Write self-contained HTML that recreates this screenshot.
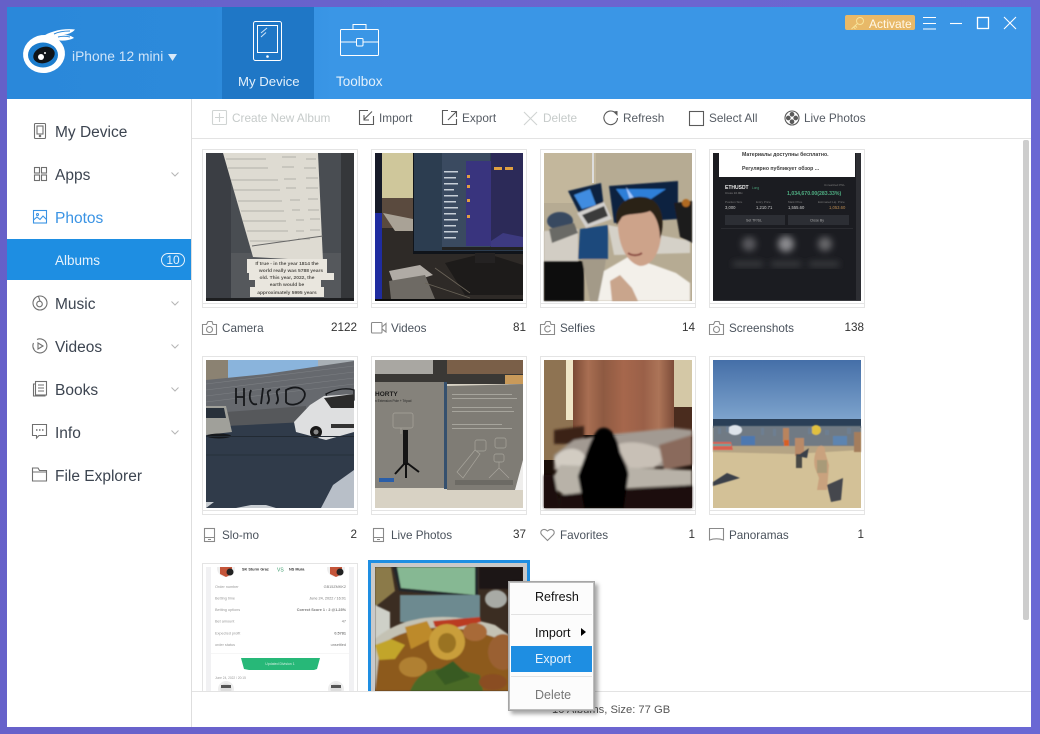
<!DOCTYPE html>
<html><head><meta charset="utf-8"><style>
*{box-sizing:border-box}
html,body{margin:0;padding:0;width:1040px;height:734px;overflow:hidden;background:#6a64cc;font-family:"Liberation Sans",sans-serif}
.a{position:absolute}
.t{position:absolute;white-space:nowrap;line-height:1}
.nav{font-size:15.5px;color:#3c4450;left:55px}
.tb{font-size:11.8px;color:#555b63}
.tb.d{color:#c6cbca}
.lab{font-size:11.7px;color:#4a525c}
.cnt{font-size:11.7px;color:#333;text-align:right;width:50px}
.fr{position:absolute;width:156px;height:159px;border:1px solid #e4e4e4;background:#fff}
.fr:after{content:"";position:absolute;left:-1px;right:-1px;bottom:3px;height:1px;background:#e4e4e4}
.ph{position:absolute;width:148px;height:148px;display:block;z-index:2;filter:blur(.35px)}
svg{display:block;overflow:visible}
.ic{position:absolute;fill:none;stroke:#6f6f6f;stroke-width:1.1}
.chev{position:absolute;width:8px;height:5px;fill:none;stroke:#b5b5b5;stroke-width:1}
</style></head><body>
<div class="a" style="left:0;top:0;width:1040px;height:734px;background:linear-gradient(100deg,#6560c8,#6c64cf 50%,#6a68d4)"></div>
<div class="a" style="left:7px;top:99px;width:1024px;height:628px;background:#fff"></div>

<!-- header -->
<div class="a" style="left:7px;top:7px;width:1024px;height:92px;background:linear-gradient(90deg,#2a88da,#2c8adb 20%,#3a96e6 32%,#3a96e6)"></div>
<div class="a" style="left:222px;top:7px;width:92px;height:92px;background:#1f77c6"></div>

<!-- logo -->
<svg class="a" style="left:20px;top:26px" width="60" height="52" viewBox="0 0 60 52">
<path d="M22 11C30 5 44 2 55 3.500C52 7 48 8 44 9C48 9 52 10 54 12C48 15 42 15 34 14Z" fill="#fff"/>
<path d="M34 8C38 6 44 5 50 5M38 11C42 10 46 10 50 11" stroke="#2a88da" stroke-width="1" fill="none"/>
<ellipse cx="24" cy="28" rx="21" ry="19" fill="#fff" transform="rotate(-8 24 28)"/>
<ellipse cx="23" cy="29" rx="15" ry="12.500" fill="#1c7ccc"/>
<ellipse cx="24" cy="29" rx="11" ry="8" fill="#101418" transform="rotate(-18 24 29)"/>
<circle cx="21" cy="31" r="3" fill="#fff"/><circle cx="25" cy="27" r="1" fill="#fff"/>
</svg>
<div class="t" style="left:72px;top:50px;font-size:13.8px;color:#cfe4f8">iPhone 12 mini</div>
<svg class="a" style="left:168px;top:54px" width="9" height="7"><path d="M0 0H9L4.500 7Z" fill="#d8e9f9"/></svg>

<!-- tab icons -->
<svg class="a" style="left:252px;top:20px" width="32" height="42" fill="none" stroke="#fff" stroke-width="1"><rect x="1.500" y="1.500" width="28" height="39" rx="2"/><rect x="5.500" y="5.500" width="20" height="27"/><path d="M9 13L15 8M9 17L14 12.500" stroke="#cfe4f8"/><circle cx="15.500" cy="36.500" r="1.300" fill="#fff" stroke="none"/></svg>
<svg class="a" style="left:339px;top:23px" width="42" height="34" fill="none" stroke="#fff" stroke-width="1"><path d="M14 6.500V1.500H27V6.500"/><rect x="1.500" y="6.500" width="38" height="26" rx="1"/><path d="M1.500 19H17M24 19H39.500"/><rect x="17.500" y="15.500" width="6.500" height="7.500" rx="1"/></svg>
<div class="t" style="left:238px;top:75px;font-size:13.2px;color:#e3f0fb">My Device</div>
<div class="t" style="left:336px;top:75px;font-size:13.5px;color:#e3f0fb">Toolbox</div>

<!-- activate -->
<div class="a" style="left:845px;top:15px;width:70px;height:15px;background:#e8b968;border-radius:2px"></div>
<svg class="a" style="left:850px;top:16px" width="15" height="14" fill="none" stroke="#f7e39a" stroke-width="1"><circle cx="10" cy="5" r="3.500"/><path d="M7.500 7.500L1.500 13M3.500 11L5.500 13M5 9.500L7 11.500"/></svg>
<div class="t" style="left:869px;top:18px;font-size:12px;color:#fff8e8">Activate</div>
<svg class="a" style="left:920px;top:14px" width="100" height="18" fill="none" stroke="#fff" stroke-width="1.100">
<path d="M3 3.500H16M3 9.500H16M3 15H16"/><path d="M30 9.500H42"/><rect x="57.500" y="3.500" width="11" height="11" stroke-width="1.300"/><path d="M84 3L96 15M96 3L84 15"/></svg>

<!-- sidebar -->
<div class="a" style="left:191px;top:99px;width:1px;height:628px;background:#dedede"></div>
<div class="a" style="left:7px;top:239px;width:184px;height:41px;background:#1e8ee2"></div>
<div class="t nav" style="top:125px">My Device</div>
<div class="t nav" style="top:168px">Apps</div>
<div class="t nav" style="top:211px;color:#3a93e4">Photos</div>
<div class="t" style="left:55px;top:254px;font-size:13.5px;color:#e6f2fc">Albums</div>
<div class="a" style="left:161px;top:253px;width:24px;height:14px;border:1px solid #e6f2fc;border-radius:8px;color:#e6f2fc;font-size:12px;line-height:12px;text-align:center">10</div>
<div class="t nav" style="top:297px">Music</div>
<div class="t nav" style="top:340px">Videos</div>
<div class="t nav" style="top:383px">Books</div>
<div class="t nav" style="top:426px">Info</div>
<div class="t nav" style="top:469px">File Explorer</div>

<svg class="ic" style="left:34px;top:123px" width="13" height="17"><rect x=".5" y=".5" width="11" height="15" rx="1"/><rect x="3" y="3" width="6" height="8"/><circle cx="6" cy="13" r=".7" fill="#6f6f6f"/></svg>
<svg class="ic" style="left:34px;top:167px" width="14" height="15"><rect x=".5" y=".5" width="5" height="5.500"/><rect x="7.500" y=".5" width="5" height="5.500"/><rect x="7.500" y="8" width="5" height="5.500"/><rect x=".5" y="8" width="5" height="5.500"/></svg>
<svg class="ic" style="left:33px;top:210px;stroke:#3a93e4" width="15" height="14"><rect x=".5" y=".5" width="13" height="12.500"/><circle cx="4.500" cy="4.500" r="1"/><path d="M.5 10L4 7L7 9.500L10 6L13.500 9.500"/></svg>
<svg class="ic" style="left:32px;top:295px" width="16" height="16"><circle cx="8" cy="8" r="7"/><circle cx="7.500" cy="9" r="2.800"/><path d="M8 6L6.500 1.500"/></svg>
<svg class="ic" style="left:32px;top:338px" width="16" height="16"><path d="M5 1.500A7 7 0 1 1 1.500 5M1 9A7 7 0 0 0 2 11"/><path d="M6 5V11L11 8Z"/></svg>
<svg class="ic" style="left:33px;top:381px" width="15" height="16"><rect x="2.500" y=".5" width="11" height="13.500"/><path d="M2.500 3H.5V15H12V14M5 4H11M5 7H11M5 10H11"/></svg>
<svg class="ic" style="left:32px;top:424px" width="16" height="16"><path d="M.5 .5H14.500V11.500H7L4.500 14V11.500H.5Z"/><path d="M4 6H5.500M7 6H8.500M10 6H11.500" stroke-width="1.500"/></svg>
<svg class="ic" style="left:32px;top:467px" width="16" height="15"><path d="M.5 14V1H6L7.500 3.500H14.500V14ZM.5 5H14.500"/></svg>
<svg class="chev" style="left:171px;top:172px"><path d="M.5 .5L4 4L7.500 .5"/></svg>
<svg class="chev" style="left:171px;top:301px"><path d="M.5 .5L4 4L7.500 .5"/></svg>
<svg class="chev" style="left:171px;top:344px"><path d="M.5 .5L4 4L7.500 .5"/></svg>
<svg class="chev" style="left:171px;top:387px"><path d="M.5 .5L4 4L7.500 .5"/></svg>
<svg class="chev" style="left:171px;top:430px"><path d="M.5 .5L4 4L7.500 .5"/></svg>

<!-- toolbar -->
<div class="a" style="left:192px;top:138px;width:839px;height:1px;background:#e3e3e3"></div>
<svg class="ic" style="left:212px;top:110px;stroke:#d0d4d3" width="16" height="16"><rect x=".5" y=".5" width="14" height="14" rx="1"/><path d="M7.500 3V12M3 7.500H12"/></svg>
<div class="t tb d" style="left:232px;top:113px">Create New Album</div>
<svg class="ic" style="left:359px;top:110px;stroke:#5a5a5a" width="16" height="16"><path d="M9 .5H.5V14.500H14.500V6"/><path d="M13 1.500L5 9.500M5 5V10H10"/></svg>
<div class="t tb" style="left:379px;top:113px">Import</div>
<svg class="ic" style="left:442px;top:110px;stroke:#5a5a5a" width="16" height="16"><path d="M6 .5H.5V14.500H14.500V9"/><path d="M6 10L14 2M9 1.500H14.500V7"/></svg>
<div class="t tb" style="left:462px;top:113px">Export</div>
<svg class="ic" style="left:523px;top:111px;stroke:#d0d4d3" width="15" height="15"><path d="M1 1L14 14M14 1L1 14"/></svg>
<div class="t tb d" style="left:543px;top:113px">Delete</div>
<svg class="ic" style="left:603px;top:110px;stroke:#5a5a5a" width="16" height="16"><path d="M12.500 3A6.800 6.800 0 1 0 14.500 8"/><path d="M10 1.500L14.500 1V6Z" fill="#5a5a5a" stroke="none"/></svg>
<div class="t tb" style="left:623px;top:113px">Refresh</div>
<svg class="ic" style="left:689px;top:111px;stroke:#5a5a5a" width="15" height="15"><rect x=".5" y=".5" width="14" height="14"/></svg>
<div class="t tb" style="left:709px;top:113px">Select All</div>
<svg class="ic" style="left:784px;top:110px;stroke:#5a5a5a" width="16" height="16"><circle cx="8" cy="8" r="7"/><circle cx="8" cy="4.300" r="1.800" fill="#5a5a5a"/><circle cx="8" cy="11.700" r="1.800" fill="#5a5a5a"/><circle cx="4.300" cy="8" r="1.800" fill="#5a5a5a"/><circle cx="11.700" cy="8" r="1.800" fill="#5a5a5a"/></svg>
<div class="t tb" style="left:804px;top:113px">Live Photos</div>

<!-- scrollbar -->
<div class="a" style="left:1023px;top:140px;width:6px;height:480px;background:#cdcdcd;border-radius:2px"></div>

<!-- frames -->
<div class="fr" style="left:202px;top:149px"></div><div class="fr" style="left:371px;top:149px"></div><div class="fr" style="left:540px;top:149px"></div><div class="fr" style="left:709px;top:149px"></div>
<div class="fr" style="left:202px;top:356px"></div><div class="fr" style="left:371px;top:356px"></div><div class="fr" style="left:540px;top:356px"></div><div class="fr" style="left:709px;top:356px"></div>
<div class="fr" style="left:202px;top:563px"></div>
<div class="a" style="left:368px;top:560px;width:162px;height:140px;background:#c9c9c9;border:3px solid #1e8ee2"></div>

<!-- 1 Camera -->
<svg class="ph" style="left:206px;top:153px" viewBox="0 0 148 148">
<rect width="148" height="148" fill="#494d52"/><rect x="135" width="13" height="148" fill="#35373a"/><rect width="25" height="148" fill="#3b3e44"/><rect x="25" y="100" width="110" height="45" fill="#55585c"/>
<path d="M17 0H112L117 108L47 104Z" fill="#dedbd2"/>
<g stroke="#b2b1aa" stroke-width="1">
<path d="M20 6H60M76 4H90M100 6H110M22 15H62M76 14H88M98 15H110M25 27H72M78 26H90M100 25H112M28 37H74M80 35H90M100 35H112M32 48H76M84 47H94M102 46H112M35 58H78M86 57H94M102 57H113M37 68H80M90 67H98M104 66H114M41 78H82M90 78H98M104 77H114M44 88H84M92 86H104"/></g>
<path d="M46 93L117 83" stroke="#666" stroke-width="1"/>
<rect x="41" y="106" width="80" height="14" fill="#e9e6de"/><rect x="43" y="120" width="85" height="7" fill="#e9e6de"/><rect x="49" y="127" width="66" height="7" fill="#e9e6de"/><rect x="44" y="134" width="74" height="10" fill="#e9e6de"/>
<g font-family="Liberation Sans" font-size="4.900" font-weight="bold" fill="#55534e" text-anchor="middle"><text x="81" y="112">If true - in the year 1814 the</text><text x="85" y="119">world really was 5788 years</text><text x="81" y="126">old. This year, 2022, the</text><text x="81" y="133">earth would be</text><text x="81" y="141">approximately 5995 years</text></g>
<rect y="145" width="148" height="3" fill="#1d1e20"/>
</svg>
<!-- 2 Videos -->
<svg class="ph" style="left:375px;top:153px" viewBox="0 0 148 148">
<rect width="148" height="148" fill="#2e2a27"/><rect width="40" height="45" fill="#cfc79b"/>
<rect y="45" width="40" height="30" fill="#5a4a3e"/>
<path d="M8 60L38 66V78L20 78Z" fill="#a9a296"/>
<rect y="0" width="7" height="148" fill="#161a28"/><rect y="60" width="7" height="88" fill="#1f2ca0"/>
<rect x="38" y="0" width="110" height="101" fill="#10141a"/>
<rect x="39" y="0" width="109" height="98" fill="#2c3d50"/>
<rect x="67" y="0" width="48" height="97" fill="#3a4a60"/>
<rect x="91" y="8" width="25" height="85" fill="#39347e"/>
<rect x="116" y="0" width="32" height="97" fill="#2c2a58"/>
<g fill="#c7cfd7"><rect x="69" y="18" width="14" height="1.500"/><rect x="69" y="24" width="12" height="1.500"/><rect x="69" y="30" width="14" height="1.500"/><rect x="69" y="36" width="10" height="1.500"/><rect x="69" y="42" width="14" height="1.500"/><rect x="69" y="48" width="12" height="1.500"/><rect x="69" y="54" width="14" height="1.500"/><rect x="69" y="60" width="12" height="1.500"/><rect x="69" y="66" width="14" height="1.500"/><rect x="69" y="72" width="12" height="1.500"/><rect x="69" y="78" width="14" height="1.500"/><rect x="69" y="84" width="12" height="1.500"/></g>
<g fill="#e0a040"><rect x="92" y="22" width="3" height="3"/><rect x="92" y="32" width="3" height="3"/><rect x="92" y="46" width="3" height="3"/><rect x="92" y="62" width="3" height="3"/><rect x="119" y="14" width="8" height="3"/><rect x="130" y="14" width="8" height="3"/></g>
<path d="M116 88L128 80L148 84V97H116Z" fill="#3d3a80"/><rect x="67" y="94" width="81" height="3" fill="#222"/>
<path d="M14 118L45 112L58 122L20 134Z" fill="#b0aba5"/><path d="M14 128L50 122L60 146H16Z" fill="#6e6a64"/>
<path d="M70 110L110 100L148 112V142H90Z" fill="#1d1b1a"/><rect x="100" y="100" width="20" height="10" fill="#242222"/>
<path d="M50 130L95 145M60 115L95 140" stroke="#6a6358" stroke-width=".8"/><rect y="146" width="148" height="2" fill="#0d0d0d"/>
</svg>
<!-- 3 Selfies -->
<svg class="ph" style="left:544px;top:153px" viewBox="0 0 148 148"><defs><filter id="b1"><feGaussianBlur stdDeviation=".8"/></filter></defs>
<rect width="148" height="148" fill="#b6ab93"/><rect width="52" height="50" fill="#c3b79c"/><rect x="48" width="2" height="30" fill="#ddd"/>
<g filter="url(#b1)">
<path d="M65 33L134 28L134 66L70 70Z" fill="#10203f"/><path d="M72 36L90 60L104 48L122 36Z" fill="#2f7fd8"/><path d="M82 34L98 56L90 60Z" fill="#a8ccff"/>
<path d="M24 38L57 30L60 55L36 62Z" fill="#10203f"/><path d="M30 42L46 36L52 52L38 56Z" fill="#3f8ce0"/>
<path d="M33 60L60 49L68 66L42 75Z" fill="#d3d0cd"/><path d="M38 62L60 53L64 63L44 71Z" fill="#3a3a3a"/>
<path d="M0 78L34 76L34 108L0 108Z" fill="#d2cdc4"/><rect y="108" width="40" height="40" fill="#101010"/>
<ellipse cx="16" cy="68" rx="13" ry="9" fill="#394a60"/><path d="M5 76L30 70L34 80L8 90Z" fill="#6a6a66"/>
<path d="M36 76L64 72V106H34Z" fill="#1d4a7b"/><path d="M64 72L146 88V100L70 102Z" fill="#d5d1c8"/><path d="M38 106H62L56 148H46Z" fill="#a39a88"/>
<path d="M130 50L148 48V90L136 84Z" fill="#1f1d1b"/><circle cx="142" cy="50" r="4" fill="#b06a20"/>
<path d="M54 148L60 118L84 104L110 112L132 120L146 130V148Z" fill="#f3f0ea"/><path d="M68 148L66 128L76 122L88 135L94 148Z" fill="#c9a58c"/>
<path d="M74 76C74 55 88 48 102 50C116 52 120 66 117 84C115 102 107 113 96 113C84 110 76 96 74 76Z" fill="#cda38a"/>
<path d="M73 72C68 50 86 42 100 44C118 46 122 68 116 86C116 74 112 62 106 58C96 62 84 60 78 64Z" fill="#2c2019"/>
<path d="M84 100C88 103 94 103 98 100" stroke="#8a4a40" stroke-width="2" fill="none"/>
</g></svg>
<!-- 4 Screenshots -->
<svg class="ph" style="left:713px;top:153px" viewBox="0 0 148 148"><defs><filter id="b2"><feGaussianBlur stdDeviation="3.500"/></filter></defs>
<rect width="148" height="148" fill="#1b1c21"/><rect x="143" width="5" height="148" fill="#2d2e33"/><rect y="147" width="148" height="1" fill="#3a3b40"/>
<rect x="6" width="136" height="24" fill="#fff"/>
<g font-family="Liberation Sans,sans-serif" fill="#3a3a3a" font-weight="bold" font-size="5.200"><text x="29" y="3">Материалы доступны бесплатно.</text><text x="29" y="17">Регулярно публикует обзор ...</text></g>
<g font-family="Liberation Sans,sans-serif"><text x="12" y="36" font-size="5" font-weight="bold" fill="#e8e8e8">ETHUSDT</text><text x="39" y="36" font-size="3.200" fill="#4a9f78">Long</text><text x="12" y="41" font-size="3" fill="#888">Cross 10.00x</text><text x="111" y="33" font-size="3" fill="#777">Unrealized PNL</text><text x="74" y="42" font-size="5.200" font-weight="bold" fill="#4fae82">1,034,670.00(283.33%)</text>
<g font-size="3" fill="#777"><text x="12" y="50">Position Size</text><text x="43" y="50">Entry Price</text><text x="75" y="50">Mark Price</text><text x="105" y="50">Estimated Liq. Price</text></g>
<g font-size="4.200" fill="#ccc"><text x="12" y="56">3,000</text><text x="43" y="56">1,210.71</text><text x="75" y="56">1,555.60</text><text x="116" y="56" fill="#b98a50">1,053.60</text></g></g>
<rect x="12" y="62" width="60" height="10" fill="#2c2e34"/><rect x="75" y="62" width="61" height="10" fill="#2c2e34"/>
<g font-family="Liberation Sans,sans-serif" font-size="3.500" fill="#aaa"><text x="33" y="68.500">Set TP/SL</text><text x="97" y="68.500">Close By</text></g>
<rect x="8" y="75" width="132" height="1" fill="#2a2b30"/>
<g filter="url(#b2)"><circle cx="36" cy="91" r="7" fill="#5a5a5e"/><circle cx="73" cy="91" r="8" fill="#8a8a8e"/><circle cx="112" cy="91" r="7" fill="#67676b"/><rect x="20" y="109" width="30" height="4" fill="#45464a"/><rect x="58" y="109" width="30" height="4" fill="#45464a"/><rect x="96" y="109" width="30" height="4" fill="#45464a"/></g>
</svg>

<!-- 5 Slo-mo -->
<svg class="ph" style="left:206px;top:360px" viewBox="0 0 148 148">
<rect width="148" height="148" fill="#303b4a"/><rect width="148" height="20" fill="#8ab4dc"/><rect width="22" height="20" fill="#8b8272"/><rect x="112" width="36" height="6" fill="#a9b0b5"/>
<path d="M0 20L60 14L148 1V42L90 50L0 58Z" fill="#66696e"/>
<g stroke="#7c7f83" stroke-width=".6"><path d="M0 24L148 6M0 30L148 12M0 36L148 18M0 42L148 24"/></g>
<g fill="none" stroke="#16181b" stroke-width="1.800"><path d="M30 44V28M38 46V28M30 37H38M45 30C42 38 45 46 51 44M57 28L55 44M65 30C57 32 67 38 61 44M74 29C66 31 76 38 70 44M80 30C92 24 102 30 98 38C94 46 82 46 80 42Z"/><path d="M120 34C132 28 142 28 148 30V40H122Z" stroke-width="1.300"/></g>
<path d="M20 52L100 46V62L20 66Z" fill="#56585b"/>
<path d="M88 62L104 45L118 36L148 34V72L120 80L90 72Z" fill="#dedfe0"/><path d="M118 38L148 34V48L125 48Z" fill="#2b2b2b"/><circle cx="110" cy="72" r="6" fill="#181818"/><circle cx="110" cy="72" r="2.500" fill="#888"/><rect x="125" y="64" width="23" height="4" fill="#333"/>
<path d="M0 46H20L26 72L0 75Z" fill="#a0a09a"/><path d="M0 48H18L20 58H0Z" fill="#28303a"/><ellipse cx="13" cy="76" rx="12" ry="2.500" fill="#15181c"/>
<rect y="76" width="148" height="1" fill="#222a33"/><path d="M0 95H148" stroke="#26303b"/>
<path d="M115 148L127 125L148 110V148Z" fill="#b8bfc8"/><path d="M0 142H8L0 148ZM30 148L45 145H60L70 148Z" fill="#c8cdd2"/>
</svg>
<!-- 6 Live Photos -->
<svg class="ph" style="left:375px;top:360px" viewBox="0 0 148 148">
<rect width="148" height="148" fill="#d8d2c4"/><rect width="148" height="24" fill="#3a3835"/><rect x="72" width="76" height="14" fill="#7a5f48"/><rect width="58" height="14" fill="#a9a7a2"/>
<rect x="130" y="15" width="18" height="9" fill="#c99a5a"/>
<path d="M0 22H69V128H0Z" fill="#85827b"/><path d="M72 26L148 24V112L140 130H72Z" fill="#7f7c75"/><rect x="69" y="22" width="3" height="107" fill="#35506e"/>
<text x="0" y="36" font-family="Liberation Sans" font-size="6.500" font-weight="bold" fill="#1c1c1c">HORTY</text><text x="0" y="42" font-family="Liberation Sans" font-size="3.200" fill="#222">n Extension Pole + Tripod</text>
<g fill="none" stroke="#a8a59c" stroke-width=".7"><rect x="18" y="53" width="20" height="15" rx="2"/><path d="M26 68V74"/><path d="M82 112L100 90L105 94L88 118Z"/><rect x="120" y="78" width="11" height="10" rx="2"/><rect x="100" y="80" width="11" height="11" rx="2"/><path d="M114 118L124 108L134 118M124 108V102"/><rect x="119" y="94" width="10" height="8" rx="2"/></g>
<rect x="28" y="70" width="5" height="35" fill="#151515"/><path d="M30 103L20 114M31 103L31 118M32 103L44 112" stroke="#111" stroke-width="2" fill="none"/>
<rect x="4" y="118" width="15" height="4" fill="#2a5ea8"/>
<g fill="#a6a49c"><rect x="77" y="34" width="60" height="1"/><rect x="77" y="38" width="65" height="1"/><rect x="77" y="47" width="60" height="1"/><rect x="77" y="51" width="62" height="1"/><rect x="77" y="64" width="50" height="1"/><rect x="77" y="68" width="60" height="1"/></g>
<rect x="80" y="120" width="58" height="5" fill="#6c6a64"/>
<path d="M140 130L148 100V130Z" fill="#efeeec"/>
</svg>
<!-- 7 Favorites -->
<svg class="ph" style="left:544px;top:360px" viewBox="0 0 148 148"><defs><linearGradient id="c1" x1="0" x2="1" y1="0" y2="0"><stop offset="0" stop-color="#7a4a34"/><stop offset=".15" stop-color="#a86e52"/><stop offset=".3" stop-color="#8e5a42"/><stop offset=".5" stop-color="#a6674c"/><stop offset=".7" stop-color="#9a6048"/><stop offset=".85" stop-color="#ac7458"/><stop offset="1" stop-color="#7c4c38"/></linearGradient><filter id="b3"><feGaussianBlur stdDeviation="1.200"/></filter></defs>
<rect width="148" height="148" fill="#1a0e08"/><rect width="30" height="100" fill="#8e7352"/><rect x="22" width="8" height="60" fill="#efe6c6"/>
<rect x="29" width="101" height="75" fill="url(#c1)"/><rect x="130" width="18" height="47" fill="#d4c8a6"/><rect x="130" y="47" width="18" height="30" fill="#4a2c1e"/>
<g filter="url(#b3)"><path d="M10 70L40 66V84H10Z" fill="#3a2016"/><path d="M10 95L30 80L60 75L90 72L130 68L148 70V105L50 110L10 110Z" fill="#a29a92"/>
<path d="M10 100C16 85 40 85 42 100L36 110H14Z" fill="#d2ccc2"/><path d="M72 85C90 78 115 86 125 95L110 108L85 108Z" fill="#c8c0b6"/>
<path d="M115 85L148 75V105L120 110Z" fill="#8a6a5c"/><path d="M5 125L16 105L148 110V125L60 130L20 135Z" fill="#b8b2a8"/>
<path d="M0 115H10L16 148H0ZM16 135L148 125V148H16Z" fill="#1f110a"/>
<path d="M34 116C44 90 50 68 58 68C68 66 74 80 76 92C82 106 86 112 84 118L80 148H40Z" fill="#060606"/></g>
</svg>
<!-- 8 Panoramas -->
<svg class="ph" style="left:713px;top:360px" viewBox="0 0 148 148"><defs><linearGradient id="s1" x1="0" x2="0" y1="0" y2="1"><stop offset="0" stop-color="#456fa8"/><stop offset="1" stop-color="#7ea4cd"/></linearGradient><filter id="b4"><feGaussianBlur stdDeviation=".5"/></filter></defs>
<rect width="148" height="60" fill="url(#s1)"/><rect y="59" width="148" height="9" fill="#2a3f57"/><rect y="68" width="148" height="80" fill="#d3c197"/>
<g filter="url(#b4)"><rect y="66" width="148" height="20" fill="#6f7a84"/><path d="M0 86H148V90L80 94L0 92Z" fill="#b5a484"/>
<ellipse cx="22" cy="70" rx="7" ry="5" fill="#dde3ea"/><rect x="28" y="76" width="14" height="9" fill="#4d78b0"/><circle cx="103" cy="70" r="5" fill="#e0c040"/><rect x="120" y="76" width="14" height="9" fill="#5d84b0"/>
<rect x="70" y="68" width="6" height="14" fill="#b9845d"/><rect x="71" y="80" width="5" height="6" fill="#d86020"/><rect x="82" y="78" width="9" height="18" fill="#b98a68"/><rect x="83" y="94" width="6" height="14" fill="#4a4a44"/>
<path d="M0 82H18L20 90H0Z" fill="#d96050"/><path d="M0 85H18" stroke="#5ea5a0" stroke-width="2"/><path d="M105 87C108 84 113 86 112 92L116 105L114 130H104L106 118L102 108C100 100 102 92 105 87Z" fill="#c9a27e"/><rect x="104" y="100" width="10" height="13" fill="#a89a78"/>
<path d="M0 122L14 113L27 118L0 126Z" fill="#3a3f48"/><path d="M84 96L96 88L94 98Z" fill="#3a3f48"/><path d="M114 125L130 118L128 140L118 142Z" fill="#45474d"/>
<rect x="141" y="72" width="7" height="20" fill="#a47d5c"/>
<g fill="#6d7e92"><rect x="5" y="68" width="3" height="6"/><rect x="13" y="66" width="3" height="6"/><rect x="48" y="68" width="3" height="7"/><rect x="60" y="69" width="3" height="7"/><rect x="95" y="68" width="4" height="6"/><rect x="112" y="70" width="4" height="5"/><rect x="134" y="68" width="4" height="6"/></g></g>
</svg>

<!-- 9 betting -->
<div class="a" style="left:206px;top:567px;width:148px;height:124px;background:#f1f1f3;overflow:hidden;z-index:2">
<svg width="148" height="124" viewBox="0 0 148 124"><rect x="5" width="138" height="124" fill="#fff"/>
<g font-family="Liberation Sans" font-size="3.800" fill="#999"><text x="9" y="21">Order number</text><text x="9" y="32.500">Betting time</text><text x="9" y="44">Betting options</text><text x="9" y="55.500">Bet amount</text><text x="9" y="67.500">Expected profit</text><text x="9" y="79">order status</text><text x="9" y="112" font-size="3.200">June 24, 2022 / 20:15</text></g>
<g font-family="Liberation Sans" font-size="3.800" fill="#777" text-anchor="end"><text x="140" y="21">GB15ZMKK2</text><text x="140" y="32.500">June 24, 2022 / 16:01</text><text x="140" y="44" font-weight="bold">Correct Score 1 : 2 @1.23%</text><text x="140" y="55.500">47</text><text x="140" y="67.500" font-weight="bold">0.5781</text><text x="140" y="79">unsettled</text></g>
<text x="36" y="3.500" font-family="Liberation Sans" font-size="3.800" font-weight="bold" fill="#333">SK Sturm Graz</text><text x="71" y="4.500" font-family="Liberation Sans" font-size="5" fill="#3a9a6a">VS</text><text x="83" y="3.500" font-family="Liberation Sans" font-size="3.800" font-weight="bold" fill="#333">NS Mura</text>
<circle cx="20" cy="1" r="9" fill="#eee"/><path d="M14 -6H26V7L20 10L14 7Z" fill="#c4553a"/><circle cx="24" cy="5" r="3.500" fill="#222"/>
<circle cx="130" cy="1" r="9" fill="#eee"/><path d="M124 -6H136V7L130 10L124 7Z" fill="#c4553a"/><circle cx="134" cy="5" r="3.500" fill="#222"/>
<path d="M35 91H114L111 102L108 103H43L38 102Z" fill="#27b878"/><text x="74" y="98" font-family="Liberation Sans" font-size="3.500" fill="#d3f0e2" text-anchor="middle">Updated Division 1</text>
<rect x="5" y="86" width="138" height=".5" fill="#eee"/>
<circle cx="20" cy="122" r="8" fill="#eee"/><circle cx="20" cy="122" r="5.500" fill="#ddd"/><rect x="15" y="118" width="10" height="3" fill="#555"/><circle cx="130" cy="122" r="8" fill="#eee"/><circle cx="130" cy="122" r="5.500" fill="#ddd"/><rect x="125" y="118" width="10" height="3" fill="#555"/></svg></div>

<!-- 10 food -->
<div class="a" style="left:375px;top:567px;width:148px;height:124px;background:#3a2a20;overflow:hidden;z-index:2">
<svg width="148" height="124" viewBox="0 0 148 124"><defs><filter id="b5"><feGaussianBlur stdDeviation=".7"/></filter></defs>
<rect width="148" height="124" fill="#3b2d22"/><g filter="url(#b5)">
<path d="M0 0H16L20 24L0 40Z" fill="#8b7a4a"/><path d="M18 0H103V30L100 31L24 24Z" fill="#20262a"/><path d="M22 0H100V28L26 21Z" fill="#86b893"/>
<rect x="104" width="44" height="22" fill="#1b1613"/><path d="M25 28H105V60L25 55Z" fill="#6d8a90"/>
<ellipse cx="121" cy="32" rx="11" ry="9" fill="#a8aaa5"/><path d="M0 38L15 45V68L0 78Z" fill="#ced0c8"/>
<path d="M0 72C30 45 80 46 120 58L148 78V124H0Z" fill="#c4c2b4"/><path d="M5 80C30 55 90 55 130 75L148 90V124H0Z" fill="#8d5a1c"/>
<path d="M0 78L16 72L30 78L20 92L4 93Z" fill="#c2a52a"/><path d="M58 54L105 50L106 55L80 61L60 60Z" fill="#ba3a24"/>
<path d="M30 60L52 54L60 70L36 82Z" fill="#bd8a2a"/><ellipse cx="72" cy="75" rx="18" ry="18" fill="#c99e3a"/><ellipse cx="72" cy="76" rx="9" ry="10" fill="#9a7322"/>
<ellipse cx="100" cy="65" rx="12" ry="9" fill="#a86a38"/><ellipse cx="128" cy="85" rx="15" ry="18" fill="#9a6030"/>
<ellipse cx="38" cy="100" rx="14" ry="10" fill="#b08030"/><path d="M35 124C45 100 65 96 105 108L108 124Z" fill="#4a6a26"/><path d="M60 105L78 94L95 110L70 118Z" fill="#385a20"/>
<ellipse cx="118" cy="115" rx="14" ry="8" fill="#8a4e20"/></g></svg></div>

<!-- footer -->
<div class="a" style="left:192px;top:691px;width:839px;height:36px;background:#fff;border-top:1px solid #e3e3e3;z-index:3"></div>
<div class="t" style="left:552px;top:705px;font-size:11.2px;color:#555;z-index:4">10 Albums, Size: 77 GB</div>

<!-- labels -->
<svg class="ic" style="left:202px;top:321px;stroke:#8a8a8a" width="15" height="14"><path d="M.5 3.500H4.500L6 .5H10L11 3.500H14.500V13.500H.5Z"/><circle cx="7.500" cy="8.500" r="3"/></svg><div class="t lab" style="left:222px;top:323px">Camera</div><div class="t cnt" style="left:307px;top:322px">2122</div>
<svg class="ic" style="left:371px;top:321px;stroke:#8a8a8a" width="16" height="14"><rect x=".5" y="1.500" width="10.500" height="10.500" rx="1"/><path d="M11 6L15 2.500V11L11 8"/></svg><div class="t lab" style="left:391px;top:323px">Videos</div><div class="t cnt" style="left:476px;top:322px">81</div>
<svg class="ic" style="left:540px;top:321px;stroke:#8a8a8a" width="15" height="14"><path d="M.5 3.500H4.500L6 .5H10L11 3.500H14.500V13.500H.5Z"/><path d="M10 6A3 3 0 1 0 10.500 9"/></svg><div class="t lab" style="left:560px;top:323px">Selfies</div><div class="t cnt" style="left:645px;top:322px">14</div>
<svg class="ic" style="left:709px;top:321px;stroke:#8a8a8a" width="15" height="14"><path d="M.5 3.500H4.500L6 .5H10L11 3.500H14.500V13.500H.5Z"/><circle cx="7.500" cy="8.500" r="3"/></svg><div class="t lab" style="left:729px;top:323px">Screenshots</div><div class="t cnt" style="left:814px;top:322px">138</div>
<svg class="ic" style="left:204px;top:528px;stroke:#8a8a8a" width="11" height="14"><rect x=".5" y=".5" width="10" height="13"/><path d="M.5 9.500H10.500M4 11.500H7"/></svg><div class="t lab" style="left:222px;top:530px">Slo-mo</div><div class="t cnt" style="left:307px;top:529px">2</div>
<svg class="ic" style="left:373px;top:528px;stroke:#8a8a8a" width="11" height="14"><rect x=".5" y=".5" width="10" height="13"/><path d="M.5 9.500H10.500M4 11.500H7"/></svg><div class="t lab" style="left:391px;top:530px">Live Photos</div><div class="t cnt" style="left:476px;top:529px">37</div>
<svg class="ic" style="left:540px;top:528px;stroke:#8a8a8a" width="15" height="13"><path d="M7.500 12.500L1.500 6.500C-1 3 3.500 -.5 7.500 3C11.500 -.5 16 3 13.500 6.500Z"/></svg><div class="t lab" style="left:560px;top:530px">Favorites</div><div class="t cnt" style="left:645px;top:529px">1</div>
<svg class="ic" style="left:709px;top:528px;stroke:#8a8a8a" width="15" height="13"><path d="M.5 .5H14.500V12C10 10.500 5 10.500 .5 12Z"/></svg><div class="t lab" style="left:729px;top:530px">Panoramas</div><div class="t cnt" style="left:814px;top:529px">1</div>

<!-- context menu -->
<div class="a" style="left:508px;top:581px;width:87px;height:130px;background:#fcfcfc;border:1px solid #a6a6a6;box-shadow:0 0 0 1px #bdbdbd inset,3px 3px 4px rgba(0,0,0,.35);z-index:5"></div>
<div class="a" style="left:511px;top:646px;width:81px;height:26px;background:#1e8ee2;z-index:6"></div>
<div class="a" style="left:511px;top:614px;width:81px;height:1px;background:#e2e2e2;z-index:6"></div>
<div class="a" style="left:511px;top:676px;width:81px;height:1px;background:#e2e2e2;z-index:6"></div>
<div class="t" style="left:535px;top:591px;font-size:12.500px;color:#111;z-index:6">Refresh</div>
<div class="t" style="left:535px;top:627px;font-size:12.500px;color:#111;z-index:6">Import</div>
<svg class="a" style="left:581px;top:628px;z-index:6" width="5" height="8"><path d="M0 0L5 4L0 8Z" fill="#000"/></svg>
<div class="t" style="left:535px;top:653px;font-size:12.500px;color:#e6f2fc;z-index:6">Export</div>
<div class="t" style="left:535px;top:689px;font-size:12.500px;color:#777;z-index:6">Delete</div>
</body></html>
